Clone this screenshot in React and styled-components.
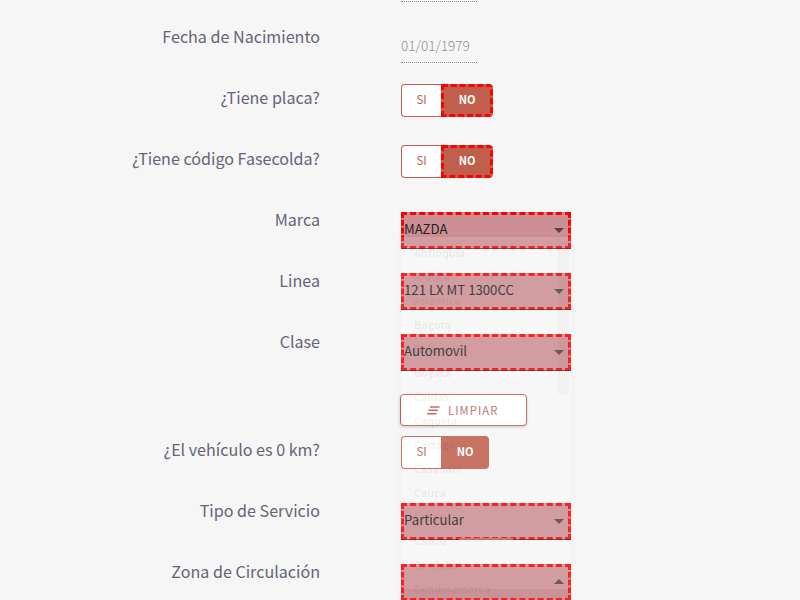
import React from "react";
import styled, { createGlobalStyle, css } from "styled-components";

const Global = createGlobalStyle`
  * { box-sizing: border-box; }
  html, body { margin: 0; height: 600px; overflow: hidden; background: #f6f6f6; }
  body { font-family: "Noto Sans CJK SC", "Noto Sans", sans-serif; }
`;
const Page = styled.main`
  position: relative;
  width: 800px;
  height: 600px;
  overflow: hidden;
  background: #f6f6f6;
`;
const Cap = styled.div`
  width: 76px;
  height: 2px;
  margin-left: 401px;
  border-bottom: 1px dotted #8b8b8b;
`;
const Row = styled.div`
  display: grid;
  grid-template-columns: 320px 1fr;
  column-gap: 81px;
  height: ${(p) => p.$h || 61}px;
`;
const Label = styled.label`
  height: 26px;
  margin-top: ${(p) => p.$top || 19}px;
  line-height: 26px;
  font-size: 16.1px;
  text-align: right;
  white-space: nowrap;
  color: #666476;
`;
const Field = styled.div`
  padding-top: ${(p) => p.$top}px;
`;
const DateInput = styled.div`
  width: 76px;
  height: 35px;
  line-height: 35px;
  font-size: 13.6px;
  font-weight: 300;
  color: #8e8e96;
  white-space: nowrap;
  border-bottom: 1px dotted #8b8b8b;
`;
const Toggle = styled.div`
  display: flex;
  width: ${(p) => (p.$wide ? 92 : 88)}px;
  height: 33px;
  font-size: 11px;
  text-align: center;
`;
const Off = styled.span`
  width: 40px;
  line-height: 29px;
  font-size: 11.5px;
  border: 1px solid #c0604e;
  border-right: 0;
  border-radius: 4px 0 0 4px;
  background: #fff;
  color: #b2645a;
`;
const On = styled.span`
  flex: 1;
  border-radius: 0 4px 4px 0;
  background: #c05f4c;
  color: #fff;
  font-weight: 700;
  line-height: 31px;
  ${(p) => p.$marked && css`
    border: 3px dashed #f00;
    line-height: 25px;
  `}
`;
const Select = styled.div`
  position: relative;
  display: flex;
  align-items: center;
  justify-content: space-between;
  width: 170px;
  height: 37px;
  padding: 0 4px 4px 0;
  border: 3px dashed #f00;
  background: #cc8f93;
  font-size: 13.2px;
  line-height: 20px;
  color: #251f26;
  white-space: nowrap;
  &::after {
    content: "";
    position: absolute;
    left: -3px;
    right: -3px;
    bottom: -3px;
    height: 1px;
    background: rgba(60, 10, 20, 0.65);
  }
`;
const Caret = styled.i`
  width: 0;
  height: 0;
  margin-top: ${(p) => (p.$up ? 1 : 4)}px;
  margin-left: auto;
  border: 5px solid transparent;
  ${(p) => p.$up
    ? css`border-top: 0; border-bottom-color: #5b4043;`
    : css`border-bottom: 0; border-top-color: #5b4043;`}
`;
const ClearButton = styled.button`
  display: flex;
  align-items: center;
  width: 127px;
  height: 32px;
  margin: 0 0 0 400px;
  padding: 0 0 0 26px;
  gap: 8px;
  border: 1px solid #c0604e;
  border-radius: 4px;
  background: #fff;
  box-shadow: 0 1px 3px rgba(0, 0, 0, 0.22);
  font: 400 11.2px/20px "Noto Sans CJK SC", sans-serif;
  letter-spacing: 1.1px;
  color: #b0665c;
`;
const Menu = styled.div`
  position: absolute;
  left: 401px;
  top: 237px;
  width: 170px;
  height: 363px;
  padding: 4px 13px;
  background: rgba(255, 255, 255, 0.13);
  box-shadow: 0 2px 8px rgba(0, 0, 0, 0.03);
  pointer-events: none;
`;
const Option = styled.div`
  height: 24px;
  line-height: 24px;
  font-size: 10.6px;
  font-weight: 700;
  color: rgba(0, 0, 0, 0.065);
`;
const Thumb = styled.div`
  position: absolute;
  right: 2px;
  top: 5px;
  width: 11px;
  height: 152px;
  background: rgba(0, 0, 0, 0.025);
`;
const Strip = styled.div`
  position: absolute;
  left: 58px;
  top: 301px;
  width: 54px;
  height: 2px;
  background: #c77467;
`;
const Foot = styled.div`
  position: absolute;
  left: 0;
  top: 352px;
  width: 170px;
  height: 11px;
  background: rgba(120, 30, 40, 0.08);
`;

const options = ["Antioquia", "Arauca", "Atlantico", "Bogota", "Bolivar", "Boyaca", "Caldas", "Caqueta", "Cartago", "Casanare", "Cauca", "Cesar", "Choco", "Cordoba", "Cundinamarca"];

function YesNo({ marked }) {
  return (
    <Toggle $wide={marked}>
      <Off>SI</Off>
      <On $marked={marked}>NO</On>
    </Toggle>
  );
}
function SelectRow({ label, value, h, up }) {
  return (
    <Row $h={h}>
      <Label>{label}</Label>
      <Field $top={25}>
        <Select>{value}<Caret $up={up} /></Select>
      </Field>
    </Row>
  );
}

export default function App() {
  return (
    <>
      <Global />
      <Page>
        <Cap />
        <Row $h={63}>
          <Label as="div" $top={21}>Fecha de Nacimiento</Label>
          <Field $top={26}><DateInput>01/01/1979</DateInput></Field>
        </Row>
        <Row>
          <Label>¿Tiene placa?</Label>
          <Field $top={19}><YesNo marked /></Field>
        </Row>
        <Row>
          <Label>¿Tiene código Fasecolda?</Label>
          <Field $top={19}><YesNo marked /></Field>
        </Row>
        <SelectRow label="Marca" value="MAZDA" />
        <SelectRow label="Linea" value="121 LX MT 1300CC" />
        <SelectRow label="Clase" value="Automovil" h={85} />
        <ClearButton>
          <svg width="13" height="9" viewBox="0 0 13 9" fill="none" stroke="#b9574a" strokeWidth="1.5">
            <path d="M3 1H12.5M1.5 4.3H11M0 7.7H9.5" />
          </svg>
          LIMPIAR
        </ClearButton>
        <Row $h={52}>
          <Label $top={10}>¿El vehículo es 0 km?</Label>
          <Field $top={10}><YesNo /></Field>
        </Row>
        <SelectRow label="Tipo de Servicio" value="Particular" />
        <SelectRow label="Zona de Circulación" value="" up />
        <Menu>
          {options.map((o) => <Option key={o}>{o}</Option>)}
          <Thumb />
          <Strip />
          <Foot />
        </Menu>
      </Page>
    </>
  );
}
